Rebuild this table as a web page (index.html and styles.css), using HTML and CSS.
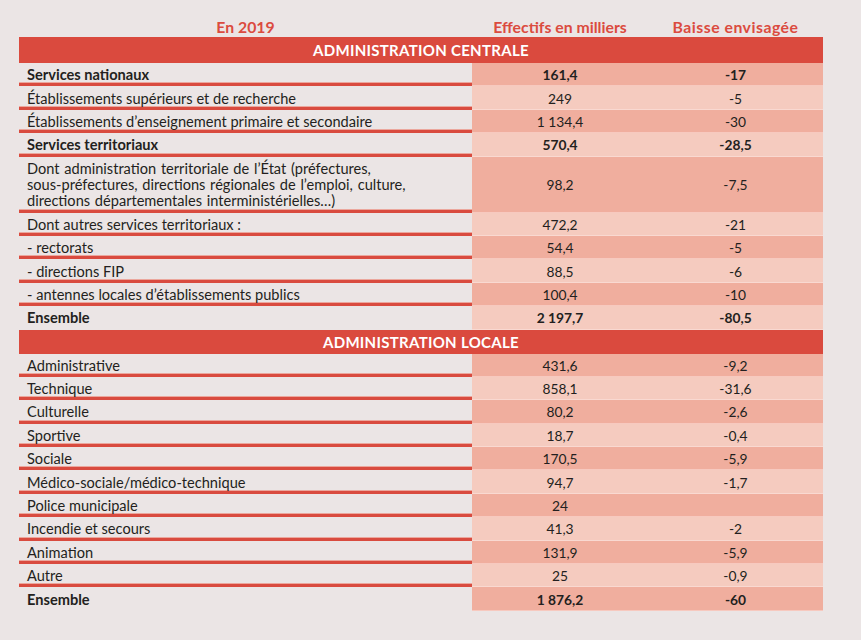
FILE: index.html
```html
<!DOCTYPE html>
<html lang="fr">
<head>
<meta charset="utf-8">
<title>Effectifs</title>
<link rel="stylesheet" href="styles.css">
</head>
<body>
<div class="page">
<table class="tbl">
  <colgroup><col class="c1"><col class="c2"><col class="c3"></colgroup>
  <thead>
    <tr class="head"><th>En 2019</th><th>Effectifs en milliers</th><th>Baisse envisagée</th></tr>
  </thead>
  <tbody>
    <tr class="sec sec1"><td colspan="3">ADMINISTRATION CENTRALE</td></tr>
    <tr class="r dark b"><td class="lab">Services nationaux</td><td>161,4</td><td>-17</td></tr>
    <tr class="r light"><td class="lab">Établissements supérieurs et de recherche</td><td>249</td><td>-5</td></tr>
    <tr class="r dark"><td class="lab">Établissements d’enseignement primaire et secondaire</td><td>1&#8239;134,4</td><td>-30</td></tr>
    <tr class="r light b"><td class="lab">Services territoriaux</td><td>570,4</td><td>-28,5</td></tr>
    <tr class="r dark tall"><td class="lab">Dont administration territoriale de l’État (préfectures,<br>sous-préfectures, directions régionales de l’emploi, culture,<br>directions départementales interministérielles…)</td><td>98,2</td><td>-7,5</td></tr>
    <tr class="r light"><td class="lab">Dont autres services territoriaux :</td><td>472,2</td><td>-21</td></tr>
    <tr class="r dark"><td class="lab">- rectorats</td><td>54,4</td><td>-5</td></tr>
    <tr class="r light"><td class="lab">- directions FIP</td><td>88,5</td><td>-6</td></tr>
    <tr class="r dark"><td class="lab">- antennes locales d’établissements publics</td><td>100,4</td><td>-10</td></tr>
    <tr class="r light b last"><td class="lab">Ensemble</td><td>2&#8239;197,7</td><td>-80,5</td></tr>
    <tr class="sec sec2"><td colspan="3">ADMINISTRATION LOCALE</td></tr>
    <tr class="r dark"><td class="lab">Administrative</td><td>431,6</td><td>-9,2</td></tr>
    <tr class="r light"><td class="lab">Technique</td><td>858,1</td><td>-31,6</td></tr>
    <tr class="r dark"><td class="lab">Culturelle</td><td>80,2</td><td>-2,6</td></tr>
    <tr class="r light"><td class="lab">Sportive</td><td>18,7</td><td>-0,4</td></tr>
    <tr class="r dark"><td class="lab">Sociale</td><td>170,5</td><td>-5,9</td></tr>
    <tr class="r light"><td class="lab">Médico-sociale/médico-technique</td><td>94,7</td><td>-1,7</td></tr>
    <tr class="r dark"><td class="lab">Police municipale</td><td>24</td><td></td></tr>
    <tr class="r light"><td class="lab">Incendie et secours</td><td>41,3</td><td>-2</td></tr>
    <tr class="r dark"><td class="lab">Animation</td><td>131,9</td><td>-5,9</td></tr>
    <tr class="r light"><td class="lab">Autre</td><td>25</td><td>-0,9</td></tr>
    <tr class="r dark b last"><td class="lab">Ensemble</td><td>1&#8239;876,2</td><td>-60</td></tr>
  </tbody>
</table>
</div>
</body>
</html>
```

FILE: styles.css
```css
html, body {
  margin: 0;
  padding: 0;
  background: #ebe5e5;
}
body {
  font-family: Lato, "Noto Sans", sans-serif;
  color: #231f20;
  font-size: 13.5px;
}
.page {
  padding: 0 0 0 19px;
}
.tbl {
  width: 804px;
  border-collapse: separate;
  border-spacing: 0;
  table-layout: fixed;
}
.c1 { width: 453px; }
.c2 { width: 176px; }
.c3 { width: 175px; }

.head th {
  color: #db4b3f;
  font-weight: 700;
  font-size: 15.8px;
  line-height: 16px;
  padding: 19px 0 2px;
  text-align: center;
}
.head th:last-child { letter-spacing: 0.5px; }
.sec td {
  background: #da4a3e;
  color: #fff;
  font-weight: 700;
  font-size: 15px;
  text-align: center;
  padding: 0;
  letter-spacing: 0.3px;
}
.sec1 td { height: 26px; }
.sec2 td { height: 24px; }

.r td {
  height: 23.4px;
  padding: 1px 0 0;
  line-height: 16px;
  text-align: center;
  vertical-align: middle;
  box-sizing: border-box;
  font-size: 13.8px;
}
.r td.lab {
  text-align: left;
  padding-left: 8px;
  font-size: 14.6px;
  background: #ebe5e5;
  box-shadow: inset 0 -3px 0 #d94b3f, inset 0 -4px 0 #eba79d;
}
.r.tall td.lab { word-spacing: 1px; }
.r.last td.lab { box-shadow: none; }
.r.dark td { background-color: #f0ae9e; }
.r.light td { background-color: #f5cbbf; }
.r td:not(.lab) { box-shadow: inset 0 -1px 0 rgba(255, 236, 230, 0.45); }
.r.dark td.lab, .r.light td.lab { background-color: #ebe5e5; }
.r.tall td { height: 56px; }
.r.b td { font-weight: 700; }
```
